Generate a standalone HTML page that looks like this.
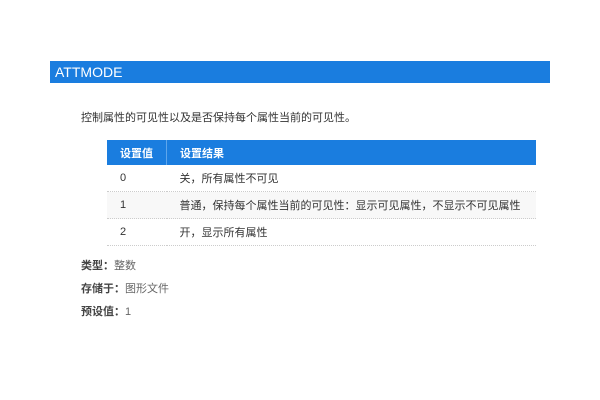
<!DOCTYPE html>
<html><head><meta charset="utf-8"><style>
body{margin:0;width:600px;height:400px;background:#fff;font-family:"Liberation Sans","Noto Sans CJK SC",sans-serif;color:#333;font-size:11px;position:relative;overflow:hidden}
.bar{position:absolute;left:50px;top:61px;width:500px;height:22px;background:#1a7ddf;color:#fff;font-size:14px;line-height:22px;padding-left:5px;box-sizing:border-box}
.desc{position:absolute;left:81px;top:110px;line-height:16px}
table{position:absolute;left:107px;top:140px;width:429px;border-collapse:collapse}
th{background:#1a7ddf;color:#fff;font-weight:bold;text-align:left;height:25px;padding:0 0 0 13px;font-size:11px}
th+th{border-left:1px solid #5ea6ec}
td{height:26px;padding:0 0 0 13px;border-bottom:1px dotted #ccc}
tr.g td{background:#f8f8f8}
.l{position:absolute;left:81px;line-height:14px}
.l b{color:#444}
.l span{color:#666}
</style></head><body>
<div class="bar">ATTMODE</div>
<div class="desc">控制属性的可见性以及是否保持每个属性当前的可见性。</div>
<table>
<tr><th style="width:46px">设置值</th><th>设置结果</th></tr>
<tr><td>0</td><td>关，所有属性不可见</td></tr>
<tr class="g"><td>1</td><td>普通，保持每个属性当前的可见性：显示可见属性，不显示不可见属性</td></tr>
<tr><td>2</td><td>开，显示所有属性</td></tr>
</table>
<div class="l" style="top:259px"><b>类型：</b><span>整数</span></div>
<div class="l" style="top:282px"><b>存储于：</b><span>图形文件</span></div>
<div class="l" style="top:305px"><b>预设值：</b><span>1</span></div>
</body></html>
